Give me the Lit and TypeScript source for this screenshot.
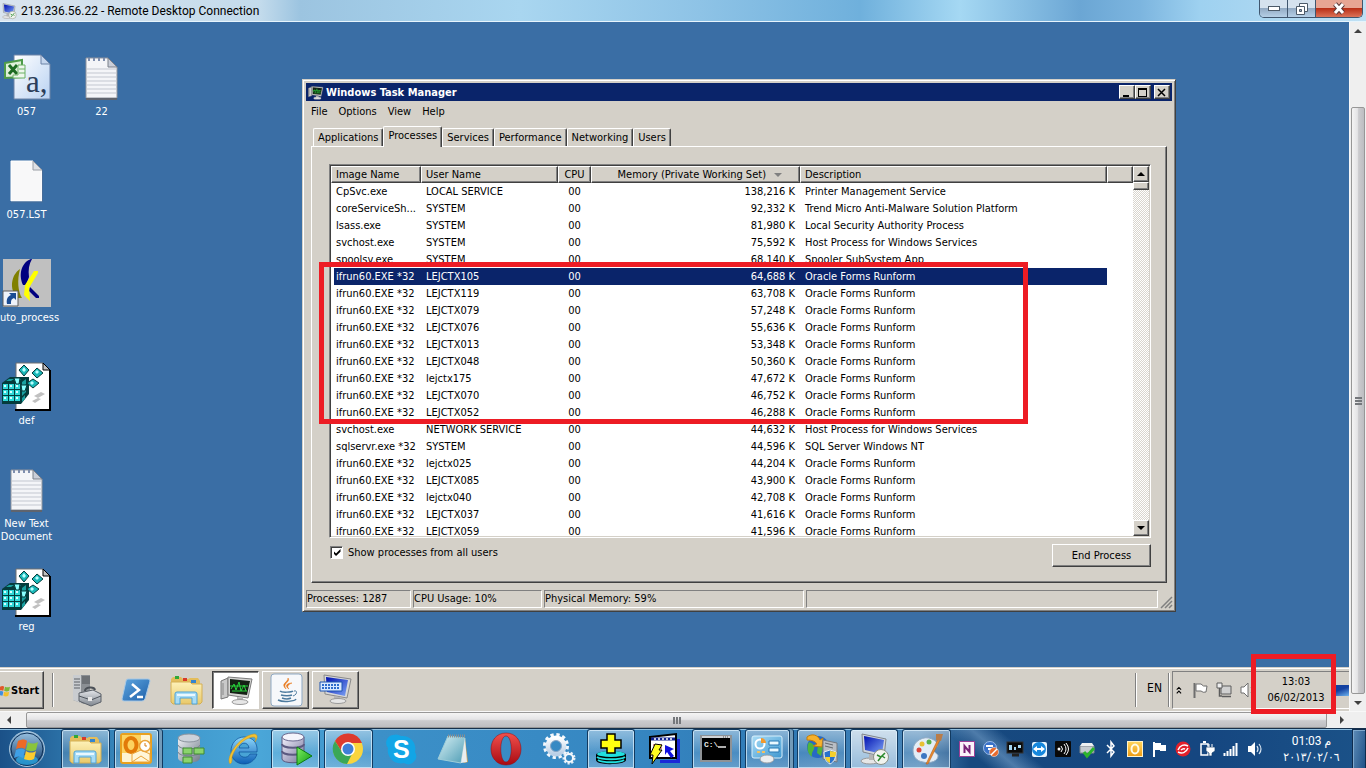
import { LitElement, html, css, svg, nothing } from "lit";
import { customElement, state } from "lit/decorators.js";
import { classMap } from "lit/directives/class-map.js";

type Row = [string, string, string, string];

const ROWS: Row[] = [
  ["CpSvc.exe", "LOCAL SERVICE", "138,216 K", "Printer Management Service"],
  ["coreServiceSh...", "SYSTEM", "92,332 K", "Trend Micro Anti-Malware Solution Platform"],
  ["lsass.exe", "SYSTEM", "81,980 K", "Local Security Authority Process"],
  ["svchost.exe", "SYSTEM", "75,592 K", "Host Process for Windows Services"],
  ["spoolsv.exe", "SYSTEM", "68,140 K", "Spooler SubSystem App"],
  ["ifrun60.EXE *32", "LEJCTX105", "64,688 K", "Oracle Forms Runform"],
  ["ifrun60.EXE *32", "LEJCTX119", "63,708 K", "Oracle Forms Runform"],
  ["ifrun60.EXE *32", "LEJCTX079", "57,248 K", "Oracle Forms Runform"],
  ["ifrun60.EXE *32", "LEJCTX076", "55,636 K", "Oracle Forms Runform"],
  ["ifrun60.EXE *32", "LEJCTX013", "53,348 K", "Oracle Forms Runform"],
  ["ifrun60.EXE *32", "LEJCTX048", "50,360 K", "Oracle Forms Runform"],
  ["ifrun60.EXE *32", "lejctx175", "47,672 K", "Oracle Forms Runform"],
  ["ifrun60.EXE *32", "LEJCTX070", "46,752 K", "Oracle Forms Runform"],
  ["ifrun60.EXE *32", "LEJCTX052", "46,288 K", "Oracle Forms Runform"],
  ["svchost.exe", "NETWORK SERVICE", "44,632 K", "Host Process for Windows Services"],
  ["sqlservr.exe *32", "SYSTEM", "44,596 K", "SQL Server Windows NT"],
  ["ifrun60.EXE *32", "lejctx025", "44,204 K", "Oracle Forms Runform"],
  ["ifrun60.EXE *32", "LEJCTX085", "43,900 K", "Oracle Forms Runform"],
  ["ifrun60.EXE *32", "lejctx040", "42,708 K", "Oracle Forms Runform"],
  ["ifrun60.EXE *32", "LEJCTX037", "41,616 K", "Oracle Forms Runform"],
  ["ifrun60.EXE *32", "LEJCTX059", "41,596 K", "Oracle Forms Runform"],
];

/* Gradients shared by every icon in the shadow root. */
const gradient = (id: string, from: string, to: string, diagonal = false) => svg`
  <linearGradient id=${id} x1="0" y1="0" x2=${diagonal ? 1 : 0} y2="1">
    <stop offset="0" stop-color=${from}></stop><stop offset="1" stop-color=${to}></stop>
  </linearGradient>`;

const DEFS = svg`<defs>
  ${gradient("paper", "#ffffff", "#dfe6f2")}
  ${gradient("paperBlue", "#ffffff", "#b9d2f2", true)}
  ${gradient("steel", "#e4e6ea", "#7e858e")}
  ${gradient("folder", "#fdf1b8", "#e9c96a")}
  ${gradient("ps", "#5ea6e0", "#1d5fa8", true)}
  ${gradient("screen", "#0010b0", "#7da4f5", true)}
  ${gradient("orb", "#9cc4e4", "#0a3566")}
  ${gradient("opera", "#f2504c", "#a80a12")}
  ${gradient("pad", "#d9f1f5", "#4f9db5", true)}
  ${gradient("gear", "#ffffff", "#b9cfe6")}
  ${gradient("db", "#eef0f4", "#6f7a88", true)}
  ${gradient("violet", "#f1f0fb", "#76739c", true)}
  ${gradient("green", "#7df060", "#0f9a14", true)}
  ${gradient("amber", "#ffd65e", "#ef9a12")}
  ${gradient("ie", "#8fd8fb", "#0b5eb5")}
  ${gradient("panel", "#a9dcf6", "#3f97cf", true)}
</defs>`;

const regCubes = [0, 1, 2].flatMap((r) => [0, 1, 2].map((c) => ({ x: 1 + c * 6, y: 22 + r * 6 })));

const ICONS: Record<string, unknown> = {
  csv: svg`
    <path d="M12 2h27l9 9v35H12z" fill="url(#paperBlue)" stroke="#6d83a6"/>
    <path d="M39 2v9h9z" fill="#c6d7ee" stroke="#6d83a6"/>
    <text x="24" y="39" font-family="Liberation Serif" font-size="31" fill="#2c3e5a">a,</text>
    <path d="M3 10l17-3v17l-17 1z" fill="#dff0da" stroke="#4f9b4a" stroke-width="2"/>
    <path d="M7 12l8 9M15 12l-8 9" stroke="#1d6b22" stroke-width="3"/>
    <path d="M16 12h7v13H11v-3h5z" fill="#eef7ec" stroke="#6bb064"/><path d="M17 16h6M17 20h6" stroke="#6bb064"/>`,
  note: svg`
    <path d="M9 5h22l9 9v31H9z" fill="#f4f5f8" stroke="#8e939c"/>
    <path d="M10 16h29M10 20h29M10 24h29M10 28h29M10 32h29M10 36h29M10 40h29" stroke="#c3c7d0"/>
    <path d="M31 5v9h9z" fill="#c9ced8" stroke="#7b808a"/><path d="M9 46h31" stroke="#5f646e" stroke-width="2"/>
    <path d="M12 5v3M17 5v3M22 5v3M27 5v3" stroke="#7f8fae" stroke-width="2"/>`,
  blank: svg`
    <path d="M9 5h22l9 9v31H9z" fill="#f8f8f9" stroke="#fff"/>
    <path d="M31 5v9h9z" fill="#dfe1e5" stroke="#9a9ea6"/><path d="M9 46h31.500V14" fill="none" stroke="#476c98"/>`,
  auto: svg`
    <path d="M1 0h48v48H1z" fill="#c0c0c0"/>
    <path d="M18 10c-9 6-11 20-3 29h5c-4-6-5-18-2-29z" fill="#808000"/>
    <path d="M29 0c-9 3-13 15-8 26h3l3-8c-1-7 0-13 3-18z" fill="#000080"/>
    <path d="M28 28l9 9v2h-3l-7-7z" fill="#000080"/>
    <path d="M32 12h4v2l-9 15 1 13-6-6 1-10z" fill="#ffff00"/>
    <path d="M1 32h15v15H1z" fill="#eef3fa" stroke="#5d5d5d"/>
    <path d="M5 45c-1-5 1-8 4-9l-2-2h7v7l-2-2c-3 1-3 3-3 6z" fill="#1a4c94"/>`,
  reg: svg`
    <path d="M14 1h27l7 7v40H14z" fill="#fff" stroke="#6f6f6f"/><path d="M48 8v40H13" fill="none" stroke="#000" stroke-width="2"/>
    <path d="M41 1v7h7z" fill="#c0c0c0" stroke="#000"/>
    <path d="M32 34l7-4 4 2-7 4zM30 39l6-3 3 1-6 4z" fill="#c0c0c0"/>
    <path d="M0 21l8-6h19v17l-8 10H0z" fill="#043c3c"/>
    ${regCubes.map((c) => svg`<rect x=${c.x} y=${c.y} width="5" height="5" fill="#30d8d8"></rect><rect x=${c.x + 1} y=${c.y + 1} width="2" height="2" fill="#d5ffff"></rect>`)}
    <path d="M4 19l3-2h5l-3 2zM12 19l3-2h4l-2 2zM20 20l4-3v5l-4 4zM20 29l4-3v4l-4 4zM20 36l3-3v4l-3 3z" fill="#18a0a0"/>
    <path d="M12 16h6l-1 6h-3zM19 23h6l-2 6h-3z" fill="#8ff" stroke="#043c3c"/>
    <path d="M22 3l5 5-5 6-5-6z" fill="#18b8b8" stroke="#043c3c"/><path d="M22 5l2 3-2 2-2-2z" fill="#b8ffff"/>
    <path d="M35 6l6 5-6 5-5-5z" fill="#18b8b8" stroke="#043c3c"/><path d="M35 8l2 2-2 2-2-2z" fill="#b8ffff"/>
    <path d="M31 17l6 4-6 5-6-5z" fill="#18b8b8" stroke="#043c3c"/><path d="M30 19l2 2-2 2-2-2z" fill="#b8ffff"/>`,
  server: svg`
    <path d="M3 1h17v27l-6 2-11-4z" fill="#8b8f94"/><path d="M3 1h8v28l-8-3z" fill="#c9ccd0"/>
    <path d="M4 5h6M4 8h6M4 11h6M4 14h6" stroke="#5c6066"/><path d="M12 2h8v8h-8z" fill="#6d7176"/>
    <path d="M9 19l14-3 8 4v8l-10 4-12-5z" fill="url(#steel)" stroke="#5b6169"/>
    <path d="M15 17c0-4 9-5 10-1" fill="none" stroke="#4b5057" stroke-width="2"/><path d="M9 22l12 4 10-4" fill="none" stroke="#4f555d"/><path d="M18 23h4v4h-4z" fill="#e8e8e8"/>`,
  powershell: svg`
    <path d="M8 5h20q2 0 2 2l-5 18q-1 2-3 2H4q-2 0-2-2L6 7q0-2 2-2z" fill="url(#ps)" stroke="#a8c9e6"/>
    <path d="M12 10l7 6-9 7M17 23h6" fill="none" stroke="#fff" stroke-width="2.500"/>`,
  explorer: svg`
    <path d="M1 5l2-2h8l2 2h5l2-1h8l2 3v21l-2 2H3l-2-2z" fill="#e3bd5c"/>
    <path d="M5 2h4v3H5z" fill="#30a838"/><path d="M13 4h4v3h-4z" fill="#d83a2a"/><path d="M21 6h5v3h-5z" fill="#3485d0"/>
    <path d="M1 8h19l2 2h10v18l-2 2H3l-2-2z" fill="url(#folder)" stroke="#d4af54"/>
    <path d="M5 30V20q0-2 2-2h18q2 0 2 2v10h-5v-6H10v6z" fill="#a8dcf5" stroke="#4ea3d8"/><path d="M7 21h18" stroke="#e9f8ff" stroke-width="2"/>`,
  taskmgr: svg`
    <path d="M1 7l7-3v19l-7 2z" fill="#c9c9c9" stroke="#777"/><path d="M3 9v12" stroke="#888"/>
    <path d="M8 3l24 2-4 19-20-3z" fill="#d5d5d3" stroke="#7c7c7c"/><path d="M10 5l20 2-3 14-17-2z" fill="#152015"/>
    <path d="M11 15l3-5 2 6 3-8 2 9 3-6 2 6M10 12h18M12 17h15" fill="none" stroke="#27d23a"/>
    <path d="M17 23l6 1v4h-6z" fill="#b4b4b4"/><ellipse cx="20" cy="28" rx="8" ry="2.500" fill="#e6e6e6" stroke="#9a9a9a"/>`,
  java: svg`
    <rect x="1" y="0" width="31" height="32" rx="3" fill="#f6f8fb" stroke="#8fa9c4"/>
    <path d="M18 4c3 4-6 5-2 11-6-6 2-6 2-11zM22 9c-5 2-5 4-3 6-5-3-2-6 3-6z" fill="#e87a1e" stroke="#e87a1e" stroke-width=".5"/>
    <path d="M10 17c2 2 12 1 13 0M11 21c3 1 9 1 11 0M8 26c6 3 17 1 18-1M12 24c3 1 7 1 9 0" fill="none" stroke="#4c7a9e" stroke-width="1.500"/>
    <path d="M24 17c4-1 3 4-1 5" fill="none" stroke="#4c7a9e"/>`,
  keyboardPc: svg`
    <path d="M4 1l27 4-4 19-22-4z" fill="#d8d8d8" stroke="#8a8a8a"/><path d="M6 3l22 3-3 16-18-4z" fill="url(#screen)"/>
    <path d="M14 22l6 1v4h-6z" fill="#b4b4b4"/><ellipse cx="18" cy="27" rx="8" ry="2.500" fill="#e6e6e6" stroke="#9a9a9a"/>
    <path d="M0 8h22v9H0z" fill="#d8e8ff" stroke="#1f55b0"/><path d="M2 11h18M2 14h18" stroke="#2e6ccc" stroke-width="2" stroke-dasharray="2 1"/>`,
  outlook: svg`
    <rect x="1" y="1" width="30" height="29" rx="2" fill="#fdf3d2" stroke="#e8a01e" stroke-width="2"/>
    <path d="M2 2h19v18H2z" fill="#fcd25f"/><ellipse cx="11" cy="12" rx="5.500" ry="7" fill="none" stroke="#e27a08" stroke-width="4"/>
    <path d="M12 21l9-4 9 4v8H12z" fill="#fff6d8" stroke="#eaa43a"/><path d="M12 29l9-6 9 6" fill="none" stroke="#eaa43a"/>
    <circle cx="25" cy="13" r="5.500" fill="#fff" stroke="#eaa43a" stroke-width="1.500"/><path d="M25 10v3h2" fill="none" stroke="#d77f14"/>`,
  database: svg`
    <path d="M4 5v20c0 6 22 6 22 0V5z" fill="url(#db)"/><ellipse cx="15" cy="5" rx="11" ry="4" fill="#cbd2da" stroke="#8a939d"/>
    <path d="M4 12c0 5 22 5 22 0M4 19c0 5 22 5 22 0" fill="none" stroke="#77828e"/>
    <path d="M9 15h9v6H9zM20 15h10v6H20zM9 24h9v6H9z" fill="#8bd46c" stroke="#3f8a33"/>`,
  ie: svg`
    <path fill-rule="evenodd" d="M17 4c9 0 14 6 13 15H12c0 6 9 7 11 2h7c-2 7-8 10-13 10C9 31 4 25 4 18S9 4 17 4zm-5 11h10c-1-7-9-6-10 0z" fill="url(#ie)" stroke="#0a4f96" stroke-width=".7"/>
    <path d="M3 31C-2 25 12 3 27 1c4 0 4 4 1 8 1-3 1-5-2-5C15 5 4 20 5 27q0 3-2 4z" fill="#f2c233" stroke="#c8931a" stroke-width=".5"/>`,
  dbplay: svg`
    <path d="M2 4v22c0 5 22 5 22 0V4z" fill="url(#violet)" stroke="#5b5980"/><ellipse cx="13" cy="4" rx="11" ry="4" fill="#f4f4fc" stroke="#6b6990"/>
    <path d="M2 11c0 5 22 5 22 0M2 18c0 5 22 5 22 0" fill="none" stroke="#5b5980" stroke-width="2"/>
    <path d="M17 14l15 9-15 9z" fill="url(#green)" stroke="#0a7d10"/>`,
  chrome: svg`
    <circle cx="16" cy="16" r="15" fill="#f9d53e"/><path d="M16 10h14A15 15 0 0 0 3 8l7 11z" fill="#dd3b2e"/>
    <path d="M3 8A15 15 0 0 0 15 31l6-12-11 0z" fill="#3aa757"/><circle cx="16" cy="16" r="7" fill="#fff"/><circle cx="16" cy="16" r="5.500" fill="#3f7fd8"/>`,
  skype: svg`
    <path d="M8 2a9 9 0 0 1 8 1 13 13 0 0 1 14 16 8 8 0 0 1-11 11A13 13 0 0 1 3 15 8 8 0 0 1 8 2z" fill="#12a5e6"/>
    <text x="8" y="25" font-family="Liberation Sans" font-weight="700" font-size="25" fill="#fff">S</text>`,
  notepad: svg`
    <path d="M10 3l18 2 3 24-4 1z" fill="#c9a35c"/><path d="M11 3l17 2-4 25L1 26z" fill="url(#pad)" stroke="#9fcdd8"/>
    <path d="M28 5l2 24-6 1z" fill="#e9eef0"/><path d="M11 3h17" stroke="#8a8f92" stroke-width="3" stroke-dasharray="1 1"/>`,
  opera: svg`
    <path fill-rule="evenodd" d="M16 0c20 0 20 32 0 32s-20-32 0-32zm0 3c-7 0-7 26 0 26s7-26 0-26z" fill="url(#opera)" stroke="#8e0b10" stroke-width=".5"/>`,
  gears: svg`
    <circle cx="13" cy="13" r="10.500" fill="none" stroke="#f4f8fc" stroke-width="5" stroke-dasharray="3 2.500"/>
    <circle cx="13" cy="13" r="8" fill="none" stroke="url(#gear)" stroke-width="5"/><circle cx="13" cy="13" r="5.500" fill="none" stroke="#86a5c6"/>
    <circle cx="26" cy="25" r="5" fill="none" stroke="#e4edf6" stroke-width="3" stroke-dasharray="2 1.500"/><circle cx="26" cy="25" r="4" fill="none" stroke="#f4f8fc" stroke-width="2"/>`,
  cross: svg`
    <path d="M1 22c0-5 30-5 30 0v5c0 5-30 6-30 0z" fill="#000"/>
    <ellipse cx="16" cy="21" rx="14" ry="3" fill="#20e0e0"/><path d="M2 24c4 3 24 3 28 0M3 27c4 3 22 3 26 0" fill="none" stroke="#20e0e0" stroke-width="2"/>
    <path d="M12 1h8v6h6v8h-6v5h-8v-5H6V7h6z" fill="#ffff10" stroke="#000" stroke-width="1.500"/>`,
  lightning: svg`
    <path d="M28 6h4v24H12v-3h16z" fill="#1b28d8"/>
    <path d="M2 4l26-3v24H2z" fill="#fff" stroke="#000" stroke-width="2"/><path d="M3 6h24" stroke="#102090" stroke-width="3"/><path d="M6 6h20" stroke="#fff" stroke-width="1.500" stroke-dasharray="2 2"/>
    <path d="M5 12h9M5 15h9" stroke="#d83030"/><path d="M17 12l9 4-4 2 4 5-3 2-4-6-2 3z" fill="#1010e0"/>
    <path d="M7 11l7 1-3 5h3L4 31l1-9H2z" fill="#ffff20" stroke="#000"/>`,
  cmd: svg`
    <rect x="1" y="3" width="30" height="25" fill="#000" stroke="#8e9296" stroke-width="2"/><path d="M2 4h28" stroke="#d0d3d6" stroke-width="2"/><path d="M23 4h6" stroke="#555" stroke-dasharray="1 1"/>
    <text x="4" y="14" font-family="Liberation Mono" font-weight="700" font-size="8" fill="#e8e8e8">C:\\</text><path d="M18 14h8" stroke="#e8e8e8" stroke-width="1.500"/>`,
  control: svg`
    <rect x="1" y="3" width="30" height="22" rx="2" fill="url(#panel)" stroke="#d8effb"/>
    <circle cx="9" cy="11" r="4.500" fill="none" stroke="#fff" stroke-width="2"/><path d="M10 5a5 5 0 0 1 5 5h-5z" fill="#f2992c"/>
    <path d="M18 8h10v4H18zM18 15h10v4H18z" fill="#e9f8ff" stroke="#2678b4"/><path d="M6 19h3M11 19h3" stroke="#f2c060" stroke-width="2"/>
    <ellipse cx="16" cy="26" rx="7" ry="4" fill="#eceef0" stroke="#9aa0a6"/>`,
  globe: svg`
    <circle cx="12" cy="14" r="11" fill="#2769c4"/><path d="M3 9c5 2 7 4 4 9s1 7-2 5-5-9-2-14zM12 12l5 2-2 9-4-3z" fill="#4fb53c"/>
    <path d="M1 4c5-4 11-2 13 3l3-2-1 9-9-1 4-2c-2-3-5-4-10-4z" fill="#f6b12c" stroke="#c17c0c"/>
    <path d="M17 7l14 3v19l-14-3z" fill="#b9bec4" stroke="#72787f"/><path d="M19 10l8 2M19 13l8 2" stroke="#62686e"/>
    <path d="M18 19l6-2 6 2c0 6-2 10-6 12-4-2-6-6-6-12z" fill="#2a72cc" stroke="#e8edf2"/><path d="M24 18v6h5c1-2 1-3 1-5zM24 24v6c-3-1-4-3-5-6z" fill="#f6d02c"/>`,
  rdp: svg`
    <path d="M4 1l24 5-2 18-21-5z" fill="#cfd4da" stroke="#7e858d"/><path d="M6 3l20 4-2 14-17-4z" fill="url(#screen)"/>
    <ellipse cx="12" cy="28" rx="9" ry="3" fill="#e6e6e6" stroke="#9a9a9a"/><path d="M11 21l5 1v5h-5z" fill="#b4b4b4"/>
    <circle cx="23" cy="24" r="7.500" fill="#f1f3ef" stroke="#8a9086"/><path d="M19 22l4 2-3 4M27 20l-3 3 3 2" fill="none" stroke="#2a8a2c" stroke-width="1.500"/>`,
  paint: svg`
    <path d="M2 17C2 8 13 2 21 6c7 3 7 7 3 9s1 5 3 7c1 6-8 9-15 7C5 28 2 23 2 17z" fill="#e3edf6" stroke="#8fa9c2"/>
    <circle cx="8" cy="17" r="2.500" fill="#d8443a"/><circle cx="11" cy="11" r="2.500" fill="#e8c132"/><circle cx="18" cy="9" r="2.500" fill="#57b04a"/><circle cx="13" cy="23" r="3" fill="#3c78c2"/>
    <path d="M27 6l2 1-12 24-2 0z" fill="#e88a2e" stroke="#a9591a" stroke-width=".5"/><path d="M25 1l7 0-2 7-5-1z" fill="#b97c48"/>`,
  orb: svg`
    <circle cx="18" cy="18" r="17.500" fill="url(#orb)" stroke="#a9c6dc"/><circle cx="18" cy="18" r="16" fill="none" stroke="#0b2e55"/>
    <ellipse cx="18" cy="29" rx="11" ry="5" fill="#2fb4f0" opacity=".7"/>
    <path d="M9 10c4-2 7-2 9 0l-2 8c-3-2-6-1-9 0z" fill="#ec6a26"/><path d="M19 11c3 2 6 2 10 0l-2 8c-4 2-7 1-10 0z" fill="#8ac43c"/>
    <path d="M7 19c3-1 6-2 9 0l-2 8c-3-2-6-2-9 0z" fill="#3f9fe6"/><path d="M17 20c3 2 7 2 10 0l-2 8c-4 2-7 1-10 0z" fill="#fccb2f"/>`,
  flagLogo: svg`
    <path d="M0 2c2-1 4-1 5 0L4 7C2 6 1 6-1 7z" fill="#e2582a"/><path d="M6 2c2 1 4 1 6 0l-1 5c-2 1-4 1-6 0z" fill="#7cb83a"/>
    <path d="M-1 8c2-1 3-1 5 0l-1 5c-2-1-4-1-5 0z" fill="#3f8fe0"/><path d="M5 8c2 1 4 1 6 0l-1 5c-2 1-4 1-6 0z" fill="#f4c02c"/>`,
  onenote: svg`<rect x=".5" y=".5" width="15" height="15" fill="#fbf2fa" stroke="#9b3f96"/><path d="M5.500 12V5l5 6V4" fill="none" stroke="#7a2177" stroke-width="2"/>`,
  denied: svg`<circle cx="7" cy="7" r="6.500" fill="#3a72c8" stroke="#9cbbe8"/><path d="M3 5h7M5 8h6" stroke="#fff" stroke-width="2"/><circle cx="11" cy="11" r="4.500" fill="#e86a2c" stroke="#fff" stroke-width=".5"/><path d="M8 14l6-6" stroke="#fff" stroke-width="1.500"/>`,
  monitor: svg`<rect x="0" y="1" width="16" height="11" fill="#0a0a0a" stroke="#333"/><path d="M2 4h3v5H2zM7 6h2v3H7zM11 4h3v3h-3z" fill="#a6d9f5"/><path d="M5 14h7" stroke="#222" stroke-width="3"/>`,
  teamviewer: svg`<rect x="1" y="1" width="15" height="15" rx="2" fill="#eaf5fd"/><circle cx="8" cy="8" r="7" fill="#1687dc"/><path d="M2 8l4-3v2h4V5l4 3-4 3V9H6v2z" fill="#fff"/>`,
  waves: svg`<rect width="16" height="16" rx="1" fill="#090909"/><circle cx="4" cy="8" r="1.500" fill="#fff"/><path d="M6 5q3 3 0 6M9 3q4 5 0 10M11 2q5 6 0 12" fill="none" stroke="#fff"/>`,
  usb: svg`<path d="M1 5h14v7H1z" fill="#c6cbd0" stroke="#7d848b"/><path d="M3 2h10l2 3H1z" fill="#eceff1"/><path d="M5 11l3 4 7-8" fill="none" stroke="#2cb42c" stroke-width="3"/>`,
  bluetooth: svg`<path d="M4 4l7 7-3 4V1l3 4-7 7" fill="none" stroke="#fff" stroke-width="1.500"/>`,
  outlookTray: svg`<rect x=".5" y=".5" width="15" height="15" fill="url(#amber)" stroke="#fff3cc"/><ellipse cx="8" cy="8" rx="3.500" ry="4.500" fill="none" stroke="#fffbe8" stroke-width="2"/>`,
  flag: svg`<path d="M3 1v15" stroke="#fff" stroke-width="2"/><path d="M4 2h6v2h5v6H9V9H4z" fill="#fff"/>`,
  trend: svg`<circle cx="8" cy="8" r="7.500" fill="#e2202a"/><path d="M3 9c2-5 6-6 10-4M13 7c-2 5-6 6-10 4M6 9q2-2 4-1" fill="none" stroke="#fff" stroke-width="1.500"/>`,
  power: svg`<path d="M2 3h7v11H2z" fill="none" stroke="#fff" stroke-width="1.500"/><path d="M4 1h3" stroke="#fff" stroke-width="2"/><path d="M7 6h9v4l-3 2v3h-3v-3L7 10z" fill="#fff" stroke="#17406f" stroke-width=".7"/><path d="M10 3v3M13 3v3" stroke="#fff"/>`,
  signal: svg`<path d="M1.500 15v-3M4.500 15v-5M7.500 15V8M10.500 15V5M13.500 15V2" stroke="#fff" stroke-width="2"/>`,
  volume: svg`<path d="M1 5h3l4-4v14l-4-4H1z" fill="#fff"/><path d="M10 5q2 3 0 6M12 3q4 5 0 10" fill="none" stroke="#d8e4f0" stroke-width="1.200"/>`,
  flagGray: svg`<path d="M2.500 1v15" stroke="#6e6e6e" stroke-width="2"/><path d="M4 2h5q2 3 6 2l-1 6q-3 1-5-1H4z" fill="#fff" stroke="#6e6e6e"/>`,
  net: svg`<path d="M5 4h10v8H5z" fill="#d0d0d0" stroke="#5c5c5c"/><path d="M6 14.500h9" stroke="#5c5c5c" stroke-width="1.500"/><path d="M1 1h5v5H1z" fill="#f0f0f0" stroke="#5c5c5c"/><path d="M3.500 6v8H6" fill="none" stroke="#5c5c5c" stroke-width="1.500"/>`,
  volGray: svg`<path d="M1 5h3l4-4v14l-4-4H1z" fill="#fff" stroke="#6e6e6e"/><path d="M11 5q2 3 0 6M13 3q4 5 0 10" fill="none" stroke="#888"/>`,
  chevrons: svg`<path d="M1 5l3-3 3 3M1 10l3-3 3 3" fill="none" stroke="#000" stroke-width="1.500"/>`,
};

const icon = (name: string, size: number, box = size) =>
  html`<svg class="icon" width=${size} height=${size} viewBox="0 0 ${box} ${box}" aria-hidden="true">${ICONS[name]}</svg>`;

const arrow = (dir: "up" | "down" | "left" | "right", color = "#000") => {
  const d = { up: "M0 4l4-4 4 4z", down: "M0 0h8L4 4z", left: "M4 0v8L0 4z", right: "M0 0v8l4-4z" }[dir];
  const tall = dir === "left" || dir === "right";
  return html`<svg class="icon" width=${tall ? 4 : 8} height=${tall ? 8 : 4} aria-hidden="true"><path d=${d} fill=${color}></path></svg>`;
};

const SHORTCUTS = [
  { icon: "csv", label: "057" },
  { icon: "blank", label: "057.LST" },
  { icon: "auto", label: "auto_process" },
  { icon: "reg", label: "def" },
  { icon: "note", label: "New Text Document" },
  { icon: "reg", label: "reg" },
  { icon: "note", label: "22" },
];

const REMOTE_TASKS = [
  { icon: "server", label: "Server Manager", kind: "plain" },
  { icon: "powershell", label: "PowerShell", kind: "plain" },
  { icon: "explorer", label: "Explorer", kind: "plain" },
  { icon: "taskmgr", label: "Task Manager", kind: "pressed" },
  { icon: "java", label: "Java", kind: "raised" },
  { icon: "keyboardPc", label: "Keyboard", kind: "raised" },
];

const LOCAL_TASKS = [
  ["explorer", "open"], ["outlook", "open stack"], ["database", ""], ["ie", ""], ["dbplay", "open"], ["chrome", "open"],
  ["skype", ""], ["notepad", ""], ["opera", ""], ["gears", ""], ["cross", "open"], ["lightning", ""], ["cmd", "open"],
  ["control", "open stack"], ["globe", "open"], ["rdp", "open active"], ["paint", "open"],
];

const TRAY = ["onenote", "denied", "monitor", "teamviewer", "waves", "usb", "bluetooth", "outlookTray", "flag", "trend", "power", "signal", "volume"];

const TABS = ["Applications", "Processes", "Services", "Performance", "Networking", "Users"];

@customElement("app-root")
export class AppRoot extends LitElement {
  @state() private selected = 5;
  @state() private tab = "Processes";

  static styles = css`
    :host {
      display: flex; flex-direction: column; height: 100vh; position: relative; overflow: hidden;
      font: 11px/13px "DejaVu Sans Condensed", "DejaVu Sans", sans-serif; color: #000;
      --face: #d4d0c8; --shade: #808080; --dark: #404040; --navy: #0a246a; --red: #ed1c24;
    }
    * { box-sizing: border-box; }
    button { font: inherit; color: inherit; border: 0; padding: 0; margin: 0; background: none; }
    .icon { display: block; flex: none; overflow: visible; }
    .defs { position: absolute; width: 0; height: 0; }

    .caption {
      flex: none; display: flex; align-items: flex-start; height: 22px; padding-left: 1px; border-bottom: 1px solid #e6f4fc;
      background: linear-gradient(90deg, #d9e4ee 0, #c3dbec 260px, #9cc4e0 300px, #a9d6f0 520px, #8ec3e6 700px, #6fb0dc 860px, #a5d8f3 960px, #6ba6d4 1080px, #7cb5df 1140px, #9ed1f0 1200px, #bfe0f4 100%);
    }
    .caption-title { display: flex; align-items: center; gap: 4px; height: 21px; flex: 1; font: 12px/16px "Roboto", "Open Sans", sans-serif; }
    .caption-buttons { display: flex; margin-right: 3px; height: 18px; border: 1px solid #40566e; border-top: 0; border-radius: 0 0 5px 5px; overflow: hidden; }
    .caption-buttons button { width: 28px; display: grid; place-items: center; border-right: 1px solid #40566e; background: linear-gradient(#d5e2ee 0 45%, #93abc4 50%, #b5cfe6); }
    .caption-buttons .close { width: 46px; border-right: 0; background: linear-gradient(#e7a593 0 45%, #b93018 50%, #dc7358); }

    .session { flex: 1; min-height: 0; display: flex; }
    .remote { flex: 1; min-width: 0; display: flex; flex-direction: column; background: #3a6ea5; overflow: hidden; }
    .desktop { flex: 1; min-height: 0; position: relative; }
    .shortcuts { display: grid; grid-auto-flow: column; grid-template: repeat(6, 103px) / 75px; grid-auto-columns: 75px; margin-left: -11px; padding-top: 31px; width: max-content; }
    .shortcut { display: flex; flex-direction: column; align-items: center; gap: 2px; color: #fff; }

    .window {
      position: absolute; left: 302px; top: 57px; width: 874px; display: flex; flex-direction: column; padding: 2px;
      background: var(--face); border: 1px solid; border-color: var(--face) var(--dark) var(--dark) var(--face);
      box-shadow: inset 1px 1px #fff, inset -1px -1px var(--shade);
    }
    .window-inner { display: flex; flex-direction: column; padding: 1px; }
    .titlebar { display: flex; align-items: center; gap: 3px; height: 18px; padding: 0 2px; background: var(--navy); color: #fff; font-weight: 700; }
    .titlebar-text { flex: 1; font-size: 11px; }
    .box { width: 16px; height: 14px; display: grid; place-items: center; background: var(--face); border: 1px solid; border-color: #fff var(--dark) var(--dark) #fff; box-shadow: inset -1px -1px var(--shade); }
    .boxes { display: flex; }
    .menu { display: flex; gap: 11px; height: 20px; padding: 0 5px; align-items: center; }
    .tabs { display: flex; align-items: flex-end; height: 25px; padding-left: 7px; }
    .tab { height: 18px; padding: 0 4px; border: 1px solid; border-color: #fff var(--dark) transparent #fff; border-bottom: 0; border-radius: 2px 2px 0 0; box-shadow: inset -1px 0 var(--shade); }
    .tab.on { height: 21px; padding-bottom: 4px; margin-bottom: -1px; background: var(--face); position: relative; }
    .sheet { margin: 0 5px; padding: 17px 15px 15px 17px; border: 1px solid; border-color: #fff var(--dark) var(--dark) #fff; box-shadow: inset -1px -1px var(--shade); display: flex; flex-direction: column; gap: 6px; }
    .list { display: flex; height: 374px; background: #fff; border: 1px solid; border-color: var(--shade) #fff #fff var(--shade); box-shadow: inset 1px 1px var(--dark), inset -1px -1px var(--face); padding: 1px; overflow: hidden; }
    .rows { flex: 1; min-width: 0; overflow: hidden; }
    table { width: 100%; table-layout: fixed; border-collapse: separate; border-spacing: 0; }
    th { height: 17px; padding: 0 4px; font-weight: 400; text-align: left; background: var(--face); border: 1px solid; border-color: #fff var(--dark) var(--dark) #fff; box-shadow: inset -1px -1px var(--shade); white-space: nowrap; }
    td { height: 17px; padding: 0 5px; white-space: nowrap; }
    td:first-child { padding: 0 0 0 2px; border-left: 3px solid #fff; }
    th:nth-child(3) { text-align: center; padding: 0; }
    td:nth-child(3) { text-align: center; padding: 0; }
    th:nth-child(4), td:nth-child(4) { text-align: right; }
    .sorted { display: flex; align-items: center; justify-content: flex-end; gap: 8px; padding-right: 13px; }
    tr.sel td:not(:last-child) { background: var(--navy); color: #fff; }
    .c-name { width: 90px; } .c-user { width: 137px; } .c-cpu { width: 33px; } .c-mem { width: 209px; } .c-rest { width: 26px; }
    .bar { width: 16px; display: flex; flex-direction: column; background: repeating-conic-gradient(#fff 0 25%, #d9d5cd 0 50%) 0 0 / 2px 2px; }
    .bar .box { height: 16px; }
    .bar .thumb { height: 8px; }
    .bar .gap { flex: 1; }
    .below { display: flex; justify-content: space-between; align-items: flex-start; }
    .check { display: flex; align-items: center; gap: 5px; height: 16px; padding-left: 1px; }
    .check input { appearance: none; width: 13px; height: 13px; margin: 0; border: 1px solid; border-color: var(--shade) #fff #fff var(--shade); box-shadow: inset 1px 1px var(--dark); background: #fff; display: grid; place-items: center; }
    .check input:checked::after { content: ""; width: 7px; height: 7px; margin: 1px 0 0 1px; background: #000; clip-path: polygon(0 30%, 36% 66%, 100% 0, 100% 40%, 36% 100%, 0 66%); }
    .end { width: 99px; height: 23px; border: 1px solid; border-color: #fff var(--dark) var(--dark) #fff; box-shadow: inset -1px -1px var(--shade); }
    .status { display: grid; grid-template-columns: 105px 129px 260px 1fr 12px; gap: 2px; margin-top: 7px; height: 18px; }
    .cell { border: 1px solid; border-color: var(--shade) #fff #fff var(--shade); line-height: 16px; }
    .grip { align-self: end; }

    .remote-bar { flex: none; height: 43px; display: flex; align-items: center; background: var(--face); border-top: 1px solid #fff; box-shadow: 0 -1px var(--face); padding: 2px 0; }
    .start { display: flex; align-items: center; width: 44px; height: 38px; padding-left: 0; gap: 1px; font-weight: 700; border: 1px solid; border-left: 0; border-color: #fff var(--dark) var(--dark); box-shadow: inset -1px -1px var(--shade); }
    .sep { width: 2px; height: 34px; background: linear-gradient(90deg, var(--shade) 50%, #fff 50%); }
    .start + .sep { margin: 0 8px 0 8px; }
    .remote-tasks { display: flex; gap: 3px; flex: 1; }
    .rt { width: 47px; height: 38px; display: grid; place-items: center; border: 1px solid transparent; }
    .rt.raised { border-color: #fff var(--dark) var(--dark) #fff; box-shadow: inset -1px -1px var(--shade); }
    .rt.pressed { background: #fff; border-color: var(--dark) #fff #fff var(--dark); box-shadow: inset 1px 1px var(--shade); }
    .lang { padding: 0 6px 4px 10px; font-size: 12px; }
    .remote-tray { display: flex; align-items: center; margin-left: 2px; width: 177px; height: 38px; padding-left: 3px; gap: 8px; border: 1px solid; border-right: 0; border-color: var(--shade) transparent #fff var(--shade); }
    .remote-clock { flex: 1; text-align: center; line-height: 16px; white-space: nowrap; }
    .scrap { width: 13px; height: 11px; background: linear-gradient(160deg, #1340a0 40%, #6fb4ef); align-self: center; }

    .vscroll { width: 17px; display: flex; flex-direction: column; background: #efefef; border-left: 1px solid #f8f8f8; }
    .hscroll { flex: none; height: 17px; display: flex; background: #efefef; border-top: 1px solid #f8f8f8; }
    .edge { display: grid; place-items: center; flex: none; }
    .vscroll .edge { height: 17px; }
    .hscroll .edge { width: 26px; padding-right: 8px; }
    .hscroll .edge.right { width: 23px; padding: 0 0 0 6px; }
    .hscroll .edge.corner { width: 16px; }
    .track { flex: 1; display: flex; }
    .vscroll .track { padding: 68px 1px 0; }
    .nub { flex: 1; display: grid; place-items: center; border: 1px solid #979797; border-radius: 2px; background: linear-gradient(#f4f4f4, #e4e4e6 45%, #cbcbce 55%, #bdbdc1); }
    .vscroll .nub { background: linear-gradient(90deg, #f4f4f4, #e4e4e6 45%, #cbcbce 55%, #bdbdc1); }
    .ridges { width: 8px; height: 7px; background: repeating-linear-gradient(90deg, #74777b 0 2px, transparent 2px 3px); }
    .vscroll .ridges { width: 7px; height: 8px; background: repeating-linear-gradient(#74777b 0 2px, transparent 2px 3px); }

    .taskbar {
      flex: none; height: 40px; display: flex; border-top: 1px solid #16304c; box-shadow: inset 0 1px #8fbfe0;
      background: linear-gradient(40deg, transparent 70%, rgba(160, 200, 235, .4) 72%, transparent 74%), linear-gradient(90deg, #1b5188 0, #2a6fa5 60px, #3f98cc 170px, #4aa6d8 260px, #3c90c8 380px, #3687c2 620px, #2f78b4 800px, #4a86b8 920px, #17497f 970px, #154680 1200px, #1b5288 100%);
    }
    .orb { width: 58px; display: grid; place-items: center; padding-right: 4px; }
    .local-tasks { flex: 0 0 894px; display: grid; grid-template-columns: repeat(17, 1fr); gap: 4px; padding: 0 1px 0 3px; }
    .lt { display: grid; place-items: center; border: 1px solid transparent; border-bottom: 0; }
    .lt.open { border-color: #123a60; border-radius: 3px 3px 0 0; box-shadow: inset 0 0 0 1px rgba(225, 243, 255, .7); background: linear-gradient(rgba(255, 255, 255, .45), rgba(255, 255, 255, .12) 60%, rgba(255, 255, 255, .25)); }
    .lt.stack { margin-right: 3px; box-shadow: inset 0 0 0 1px rgba(225, 243, 255, .7), 3px 0 0 rgba(180, 220, 245, .6), 4px 0 0 #123a60; }
    .lt.active { background: linear-gradient(rgba(255, 255, 255, .75), rgba(225, 238, 250, .55)); }
    .tray { display: flex; align-items: center; gap: 8px; flex: 1; padding-left: 7px; }
    .local-clock { flex: 1; text-align: center; color: #fff; font: 12px/16px "Roboto", "DejaVu Sans Condensed", sans-serif; white-space: nowrap; }
    .peek { width: 14px; border: 1px solid #0e2c4e; border-bottom: 0; background: linear-gradient(100deg, #5f8db8, #1f5288); box-shadow: inset 1px 1px #7fa8cc; }

    .mark { position: absolute; border: 5px solid var(--red); pointer-events: none; }
    .mark-rows { left: 319px; top: 262px; width: 709px; height: 162px; }
    .mark-clock { left: 1251px; top: 654px; width: 85px; height: 60px; }
  `;

  private renderTable() {
    return html`<div class="list">
      <div class="rows">
        <table>
          <colgroup><col class="c-name"><col class="c-user"><col class="c-cpu"><col class="c-mem"><col><col class="c-rest"></colgroup>
          <thead><tr>
            <th>Image Name</th><th>User Name</th><th>CPU</th>
            <th><div class="sorted">Memory (Private Working Set) ${arrow("down", "#808080")}</div></th>
            <th>Description</th><th></th>
          </tr></thead>
          <tbody>
            ${ROWS.map(([name, user, mem, desc], i) => html`
              <tr class=${classMap({ sel: i === this.selected })} @click=${() => (this.selected = i)}>
                <td>${name}</td><td>${user}</td><td>00</td><td>${mem}</td><td>${desc}</td><td></td>
              </tr>`)}
          </tbody>
        </table>
      </div>
      <div class="bar">
        <button class="box" aria-label="Scroll up">${arrow("up")}</button>
        <div class="box thumb"></div>
        <div class="gap"></div>
        <button class="box" aria-label="Scroll down">${arrow("down")}</button>
      </div>
    </div>`;
  }

  private renderWindow() {
    return html`<section class="window"><div class="window-inner">
      <header class="titlebar">
        ${icon("taskmgr", 15, 32)}
        <span class="titlebar-text">Windows Task Manager</span>
        <div class="boxes">
          <button class="box" aria-label="Minimize"><svg class="icon" width="10" height="9"><path d="M1 7h6v2H1z"></path></svg></button>
          <button class="box" aria-label="Maximize"><svg class="icon" width="10" height="9"><path d="M0 0h9v9H0zM1 2v6h7V2z" fill-rule="evenodd"></path></svg></button>
        </div>
        <button class="box" aria-label="Close"><svg class="icon" width="10" height="9"><path d="M1 1l7 7M8 1L1 8" stroke="#000" stroke-width="1.500"></path></svg></button>
      </header>
      <nav class="menu">${["File", "Options", "View", "Help"].map((m) => html`<button>${m}</button>`)}</nav>
      <div class="tabs" role="tablist">
        ${TABS.map((t) => html`<button role="tab" class=${classMap({ tab: true, on: t === this.tab })} @click=${() => (this.tab = t)}>${t}</button>`)}
      </div>
      <div class="sheet">
        ${this.renderTable()}
        <div class="below">
          <label class="check"><input type="checkbox" checked>Show processes from all users</label>
          <button class="end">End Process</button>
        </div>
      </div>
      <footer class="status">
        <span class="cell">Processes: 1287</span><span class="cell">CPU Usage: 10%</span>
        <span class="cell">Physical Memory: 59%</span><span class="cell"></span>
        <svg class="icon grip" width="12" height="12"><path d="M1 12L12 1M5 12l7-7M9 12l3-3" stroke="#808080" stroke-width="1.500"></path></svg>
      </footer>
    </div></section>`;
  }

  render() {
    return html`
      <svg class="defs" aria-hidden="true">${DEFS}</svg>
      <header class="caption">
        <div class="caption-title">${icon("rdp", 16, 32)}<span>213.236.56.22 - Remote Desktop Connection</span></div>
        <div class="caption-buttons">
          <button aria-label="Minimize"><svg class="icon" width="12" height="5"><rect x=".5" y=".5" width="11" height="4" fill="#fff" stroke="#4c5a68"></rect></svg></button>
          <button aria-label="Restore"><svg class="icon" width="12" height="12"><path d="M3.500.5h8v8h-8z" fill="#fff" stroke="#4c5a68"></path><path d="M.5 3.500h8v8h-8z" fill="#fff" stroke="#4c5a68"></path><path d="M3.500 6.500h2v2h-2z" fill="#9ab" stroke="#4c5a68"></path></svg></button>
          <button class="close" aria-label="Close"><svg class="icon" width="12" height="11"><path d="M2 1l8 9M10 1L2 10" stroke="#5c3a3a" stroke-width="5"></path><path d="M2 1l8 9M10 1L2 10" stroke="#fff" stroke-width="3"></path></svg></button>
        </div>
      </header>
      <div class="session">
        <main class="remote">
          <div class="desktop">
            <div class="shortcuts">${SHORTCUTS.map((s) => html`<button class="shortcut">${icon(s.icon, 50)}<span>${s.label}</span></button>`)}</div>
            ${this.renderWindow()}
          </div>
          <div class="remote-bar">
            <button class="start">${icon("flagLogo", 10, 12)}Start</button>
            <span class="sep"></span>
            <div class="remote-tasks">${REMOTE_TASKS.map((t) => html`<button class="rt ${t.kind}" aria-label=${t.label}>${icon(t.icon, 32)}</button>`)}</div>
            <span class="sep"></span><span class="lang">EN</span><span class="sep"></span>
            <div class="remote-tray">
              ${icon("chevrons", 8, 11)}${icon("flagGray", 16)}${icon("net", 16)}${icon("volGray", 16)}
              <div class="remote-clock">13:03<br>06/02/2013</div>
              <span class="scrap"></span>
            </div>
          </div>
        </main>
        <div class="vscroll">
          <div class="edge">${arrow("up", "#404040")}</div>
          <div class="track"><div class="nub"><span class="ridges"></span></div></div>
          <div class="edge">${arrow("down", "#404040")}</div>
        </div>
      </div>
      <div class="hscroll">
        <div class="edge">${arrow("left", "#404040")}</div>
        <div class="track"><div class="nub"><span class="ridges"></span></div></div>
        <div class="edge right">${arrow("right", "#404040")}</div>
        <div class="edge corner"></div>
      </div>
      <footer class="taskbar">
        <button class="orb" aria-label="Start">${icon("orb", 36)}</button>
        <div class="local-tasks">${LOCAL_TASKS.map(([name, kind]) => html`<button class="lt ${kind}" aria-label=${name}>${icon(name, 32)}</button>`)}</div>
        <div class="tray">
          ${TRAY.map((t) => icon(t, 16))}
          <div class="local-clock">01:03 م<br>٢٠١٣/٠٢/٠٦</div>
        </div>
        <button class="peek" aria-label="Show desktop">${nothing}</button>
      </footer>
      <div class="mark mark-rows"></div>
      <div class="mark mark-clock"></div>
    `;
  }
}
